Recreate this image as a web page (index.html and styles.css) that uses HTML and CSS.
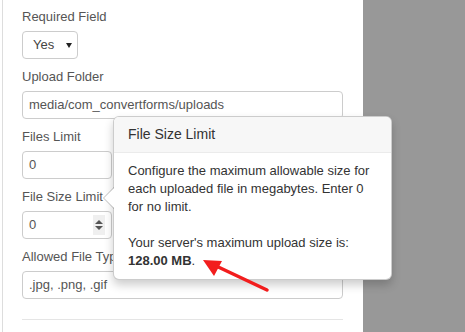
FILE: index.html
```html
<!DOCTYPE html>
<html lang="en">
<head>
  <meta charset="UTF-8">
  <meta name="viewport" content="width=device-width, initial-scale=1.0">
  <title>Upload Field Options</title>
  <link rel="stylesheet" href="styles.css">
</head>
<body>
  <div class="page">
    <div class="panel">
      <div class="field">
        <label>Required Field</label>
        <div class="select">Yes<span class="caret"></span></div>
      </div>
      <div class="field">
        <label>Upload Folder</label>
        <div class="input">media/com_convertforms/uploads</div>
      </div>
      <div class="field">
        <label>Files Limit</label>
        <div class="input small">0</div>
      </div>
      <div class="field">
        <label>File Size Limit</label>
        <div class="input small number">
          <span>0</span>
          <span class="spin"><i class="up"></i><i class="down"></i></span>
        </div>
      </div>
      <div class="field">
        <label>Allowed File Types</label>
        <div class="input">.jpg, .png, .gif</div>
      </div>
      <hr>
    </div>
    <div class="side"></div>
  </div>

  <div class="popover">
    <div class="arrow"></div>
    <div class="popover-title">File Size Limit</div>
    <div class="popover-content">
      Configure the maximum allowable size for each uploaded file in megabytes. Enter 0 for no limit.<br><br>
      Your server's maximum upload size is: <b>128.00 MB</b>.
    </div>
  </div>

  <!-- red annotation arrow -->
  <svg class="pointer" width="465" height="332" viewBox="0 0 465 332">
    <line x1="267" y1="290" x2="214" y2="265" stroke="#f21d1d" stroke-width="3.5" stroke-linecap="round"/>
    <polygon points="203,260 222,261 214,276" fill="#f21d1d"/>
  </svg>
</body>
</html>
```

FILE: styles.css
```css
body {
  margin: 0;
  font-family: 'Liberation Sans', Arial, sans-serif;
  font-size: 13px;
  color: #555;
  background: #fff;
  height: 332px;
  overflow: hidden;
}
.page {
  display: flex;
  height: 332px;
}
.panel {
  width: 361px;
  margin-left: 2px;
  border-left: 1px solid #ddd;
  padding: 8px 20px 0 19px;
  box-sizing: border-box;
}
.side {
  flex: 1;
  background: #989898;
}
.field {
  margin-bottom: 9px;
}
label {
  display: block;
  line-height: 18px;
  margin-bottom: 5px;
  color: #555;
}
.input, .select {
  height: 28px;
  box-sizing: border-box;
  border: 1px solid #ccc;
  border-radius: 4px;
  padding: 0 6px;
  line-height: 26px;
  color: #555;
  background: #fff;
}
.select {
  width: 56px;
  padding-left: 10px;
  display: flex;
  align-items: center;
  gap: 12px;
  color: #444;
}
.caret {
  width: 0;
  height: 0;
  border-left: 3px solid transparent;
  border-right: 3px solid transparent;
  border-top: 5px solid #222;
  margin-top: 1px;
}
.small {
  width: 90px;
}
.number {
  display: flex;
  justify-content: space-between;
  align-items: center;
}
.spin {
  width: 12px;
  height: 20px;
  background: #efefef;
  display: flex;
  flex-direction: column;
  align-items: center;
  justify-content: center;
  gap: 2px;
}
.spin i {
  width: 0;
  height: 0;
  border-left: 4px solid transparent;
  border-right: 4px solid transparent;
}
.spin .up {
  border-bottom: 4px solid #555;
}
.spin .down {
  border-top: 4px solid #555;
}
hr {
  border: 0;
  border-top: 1px solid #e5e5e5;
  margin: 20px 0 0;
}
.popover {
  position: absolute;
  left: 113px;
  top: 116px;
  width: 279px;
  box-sizing: border-box;
  background: #fff;
  border: 1px solid rgba(0,0,0,0.2);
  border-radius: 6px;
  box-shadow: 0 5px 10px rgba(0,0,0,0.2);
  color: #333;
}
.popover-title {
  padding: 8px 14px;
  font-size: 14px;
  line-height: 19px;
  background: #f7f7f7;
  border-bottom: 1px solid #ebebeb;
  border-radius: 5px 5px 0 0;
}
.popover-content {
  padding: 9px 14px;
  line-height: 18px;
}
.arrow, .arrow::after {
  position: absolute;
  width: 0;
  height: 0;
  border: solid transparent;
}
.arrow {
  left: -11px;
  top: 50%;
  margin-top: -11px;
  border-width: 11px 11px 11px 0;
  border-right-color: rgba(0,0,0,0.25);
}
.arrow::after {
  content: "";
  left: 1px;
  bottom: -10px;
  border-width: 10px 10px 10px 0;
  border-right-color: #fff;
}
.pointer {
  position: absolute;
  left: 0;
  top: 0;
}
```
